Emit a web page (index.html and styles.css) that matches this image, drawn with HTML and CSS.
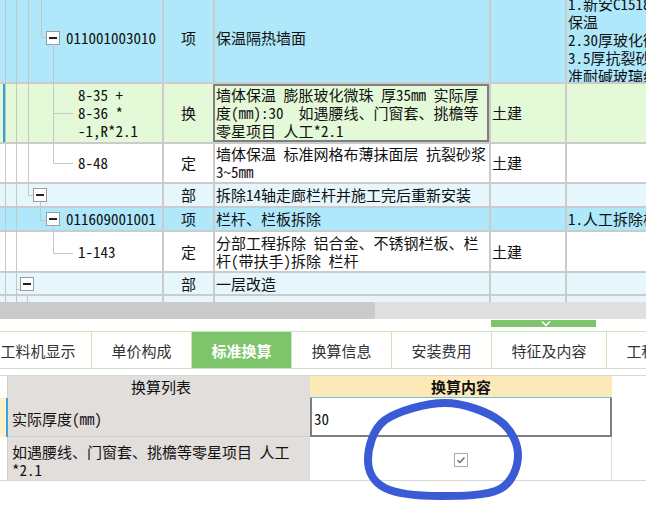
FILE: index.html
```html
<!DOCTYPE html>
<html lang="zh-CN">
<head>
<meta charset="utf-8">
<title>标准换算</title>
<link rel="stylesheet" href="styles.css">
</head>
<body>
<div class="grid-wrap">
  <div class="grid">
    <div class="row r-item h-91">
      <div class="c c-tree lv3"><span class="exp"></span><span class="code">011001003010</span></div>
      <div class="c c-type">项</div>
      <div class="c c-name">保温隔热墙面</div>
      <div class="c c-prof"></div>
      <div class="c c-feat">1.新安C1518窗口侧壁<br>保温<br>2.30厚玻化微珠保温<br>3.5厚抗裂砂浆复合标<br>准耐碱玻璃纤维网格布</div>
    </div>
    <div class="row r-sub cur h-60">
      <div class="c c-tree leaf"><span class="code">8-35 +<br>8-36 *<br>-1,R*2.1</span></div>
      <div class="c c-type">换</div>
      <div class="c c-name sel">墙体保温 膨胀玻化微珠 厚35mm 实际厚<br>度(mm):30&nbsp;&nbsp;如遇腰线、门窗套、挑檐等<br>零星项目 人工*2.1</div>
      <div class="c c-prof">土建</div>
      <div class="c c-feat"></div>
    </div>
    <div class="row r-def h-40">
      <div class="c c-tree leaf"><span class="code">8-48</span></div>
      <div class="c c-type">定</div>
      <div class="c c-name">墙体保温 标准网格布薄抹面层 抗裂砂浆<br>3~5mm</div>
      <div class="c c-prof">土建</div>
      <div class="c c-feat"></div>
    </div>
    <div class="row r-part h-24">
      <div class="c c-tree lv2"><span class="exp"></span></div>
      <div class="c c-type">部</div>
      <div class="c c-name">拆除14轴走廊栏杆并施工完后重新安装</div>
      <div class="c c-prof"></div>
      <div class="c c-feat"></div>
    </div>
    <div class="row r-item h-24">
      <div class="c c-tree lv3"><span class="exp"></span><span class="code">011609001001</span></div>
      <div class="c c-type">项</div>
      <div class="c c-name">栏杆、栏板拆除</div>
      <div class="c c-prof"></div>
      <div class="c c-feat">1.人工拆除栏杆</div>
    </div>
    <div class="row r-def h-41">
      <div class="c c-tree leaf"><span class="code">1-143</span></div>
      <div class="c c-type">定</div>
      <div class="c c-name">分部工程拆除 铝合金、不锈钢栏板、栏<br>杆(带扶手)拆除 栏杆</div>
      <div class="c c-prof">土建</div>
      <div class="c c-feat"></div>
    </div>
    <div class="row r-part h-23">
      <div class="c c-tree lv1"><span class="exp"></span></div>
      <div class="c c-type">部</div>
      <div class="c c-name">一层改造</div>
      <div class="c c-prof"></div>
      <div class="c c-feat"></div>
    </div>
    <div class="row r-part h-30">
      <div class="c c-tree"></div>
      <div class="c c-type"></div>
      <div class="c c-name"></div>
      <div class="c c-prof"></div>
      <div class="c c-feat"></div>
    </div>
  </div>
  <svg class="tree-lines" width="162" height="302" viewBox="0 0 162 302">
    <g stroke="#c6c6c6" stroke-width="1" fill="none">
      <path d="M5.5 0V302"/>
      <path d="M16.5 0V302"/>
      <path d="M16 289.5H20"/>
      <path d="M27.5 296V302"/>
      <path d="M28.5 0V195.5H33"/>
      <path d="M41.5 0V37.5H46"/>
      <path d="M40.5 202V220.5H46"/>
      <path d="M53.5 44V163.5H73"/>
      <path d="M53 113.5H73"/>
      <path d="M53.5 227V253.5H73"/>
    </g>
  </svg>
</div>

<div class="hscroll"><div class="thumb"></div></div>

<div class="splitter">
  <div class="handle">
    <svg class="chev" width="10" height="6" viewBox="0 0 10 6"><path d="M1 0.5L5 4.5L9 0.5" stroke="#fff" stroke-width="1.5" fill="none"/></svg>
  </div>
</div>

<div class="tabs">
  <div class="tab first">工料机显示</div>
  <div class="tab">单价构成</div>
  <div class="tab active">标准换算</div>
  <div class="tab">换算信息</div>
  <div class="tab">安装费用</div>
  <div class="tab wide">特征及内容</div>
  <div class="tab wide">工程量明细</div>
</div>

<div class="sub">
  <div class="sub-row sub-head">
    <div class="s-ind"></div>
    <div class="s-name">换算列表</div>
    <div class="s-cont">换算内容</div>
  </div>
  <div class="sub-row s-r1">
    <div class="s-ind cur"></div>
    <div class="s-name">实际厚度(mm)</div>
    <div class="s-cont s-input">30</div>
  </div>
  <div class="sub-row s-r2">
    <div class="s-ind"></div>
    <div class="s-name">如遇腰线、门窗套、挑檐等零星项目 人工<br>*2.1</div>
    <div class="s-cont s-check">
      <svg class="cb" width="14" height="14" viewBox="0 0 14 14">
        <rect x="0.5" y="0.5" width="13" height="13" fill="#fff" stroke="#ababab"/>
        <path d="M3.5 7.2L5.8 9.4L10.5 4.6" stroke="#6b6b6b" stroke-width="1.4" fill="none"/>
      </svg>
    </div>
  </div>
</div>

<svg class="mark" width="646" height="509" viewBox="0 0 646 509">
  <path d="M445,403 C464,403 488,412 500,421 C512,430 518,444 518,455 C518,466 513,482 500,489 C487,496 459,496 440,496 C421,496 397,494 385,488 C373,482 368,471 368,460 C368,449 372,430 385,420 C398,411 426,403 445,403 Z" fill="none" stroke="#3a5ad6" stroke-width="8" stroke-linecap="round" stroke-linejoin="round"/>
</svg>
</body>
</html>
```

FILE: styles.css
```css
* { box-sizing: border-box; }
html, body { margin: 0; padding: 0; }
body {
  width: 646px;
  height: 509px;
  overflow: hidden;
  position: relative;
  background: #fff;
  font-family: "Noto Sans Mono CJK SC", "Noto Sans CJK SC", sans-serif;
  font-size: 15px;
  color: #111;
}

/* ---------- top grid ---------- */
.grid-wrap {
  position: relative;
  height: 302px;
  overflow: hidden;
}
.grid { margin-top: -7px; }
.row {
  display: grid;
  grid-template-columns: 162px 51px 276px 76px 300px;
  border-bottom: 2px solid #cbcbcb;
}
.h-91 { height: 91px; }
.h-60 { height: 60px; }
.h-40 { height: 40px; }
.h-41 { height: 41px; }
.h-24 { height: 24px; }
.h-23 { height: 23px; }
.h-30 { height: 30px; }

.r-item { background: #aee8fa; }
.r-sub { background: #e3f9d8; }
.r-def { background: #fff; }
.r-part { background: #e5f6fc; }

.c {
  display: flex;
  align-items: center;
  line-height: 18px;
  white-space: nowrap;
  overflow: hidden;
}
.c + .c { border-left: 2px solid #cbcbcb; }
.c-type { justify-content: center; }
.c-name, .c-prof, .c-feat { padding-left: 1px; }
.c-feat { align-items: flex-start; padding-top: 2px; }

.cur .c-tree {
  background: linear-gradient(to right, transparent 3px, #2aa2dc 3px, #2aa2dc 5px, transparent 5px);
}
.sel { outline: 2px solid #7f7f7f; outline-offset: -2px; }

.lv1 { padding-left: 20px; }
.lv2 { padding-left: 33px; }
.lv3 { padding-left: 46px; }
.leaf { padding-left: 78px; }

.exp {
  flex: none;
  width: 14px;
  height: 14px;
  border: 1px solid #9c9c9c;
  background: #fff;
  display: flex;
  align-items: center;
  justify-content: center;
}
.exp::after {
  content: "";
  width: 8px;
  height: 2px;
  background: #222;
}
.code { margin-left: 6px; }
.leaf .code { margin-left: 0; }

.tree-lines {
  position: absolute;
  left: 0;
  top: 0;
  pointer-events: none;
}

/* ---------- scrollbar + splitter ---------- */
.hscroll {
  height: 17px;
  background: #e0e0e0;
}
.thumb {
  width: 375px;
  height: 100%;
  background: #cbcbcb;
  border-radius: 0 3px 3px 0;
}
.splitter {
  height: 12px;
  padding-top: 1px;
}
.handle {
  margin-left: 491px;
  width: 105px;
  height: 7px;
  background: #7ec46c;
  display: flex;
  justify-content: center;
  align-items: center;
}
.chev { margin-left: 4px; }

/* ---------- tabs ---------- */
.tabs {
  display: flex;
  height: 38px;
  border-top: 1px solid #c9e7bc;
  border-bottom: 1px solid #d4d9d2;
  font-family: "Noto Sans CJK SC", sans-serif;
  font-size: 15px;
  color: #333;
  overflow: hidden;
}
.tab {
  flex: none;
  width: 100px;
  display: flex;
  align-items: center;
  justify-content: center;
  border-right: 1px solid #c9e7bc;
  white-space: nowrap;
}
.tab.first { width: 107px; margin-left: -15px; }
.tab.wide { width: 115px; }
.tab.active {
  background: #7dc46b;
  color: #fff;
  font-weight: bold;
}

/* ---------- sub table ---------- */
.sub { margin-top: 6px; }
.sub-row {
  display: grid;
  grid-template-columns: 8px 302px 302px;
}
.sub-head {
  height: 23px;
  border-top: 1px solid #dadada;
}
.sub-head .s-ind { border-right: 1px solid #cfcfcf; border-bottom: 1px solid #cfcfcf; }
.sub-head .s-name {
  display: flex;
  align-items: center;
  justify-content: center;
  border-bottom: 1px solid #cfcfcf;
  font-family: "Noto Sans CJK SC", sans-serif;
}
.sub-head .s-cont {
  display: flex;
  align-items: center;
  justify-content: center;
  background: #fde9b7;
  font-weight: bold;
  border-bottom: 2px solid #6cc0e6;
  font-family: "Noto Sans CJK SC", sans-serif;
}
.s-r1 { height: 39px; }
.s-r2 { height: 44px; border-bottom: 1px solid #d8d8d8; }
.s-ind { border-right: 1px solid #cfcfcf; }
.s-ind.cur { background: #fdf1c8; border-right: 2px solid #3ba6da; }
.s-name {
  display: flex;
  align-items: center;
  padding-left: 4px;
  line-height: 18px;
  background: #e1dedc;
  white-space: nowrap;
}
.s-r1 .s-name { border-bottom: 1px solid #d3cfcd; padding-top: 4px; }
.s-r2 .s-name { padding-top: 4px; }
.s-input {
  display: flex;
  align-items: center;
  padding-left: 2px;
  padding-top: 4px;
  background: #fff;
  border: 2px solid #7e7e7e;
  border-top: none;
}
.s-check {
  display: flex;
  align-items: center;
  justify-content: center;
  padding-top: 2px;
  border-right: 1px solid #dedede;
}
.cb { display: block; }

.mark {
  position: absolute;
  left: 0;
  top: 0;
  pointer-events: none;
}
```
